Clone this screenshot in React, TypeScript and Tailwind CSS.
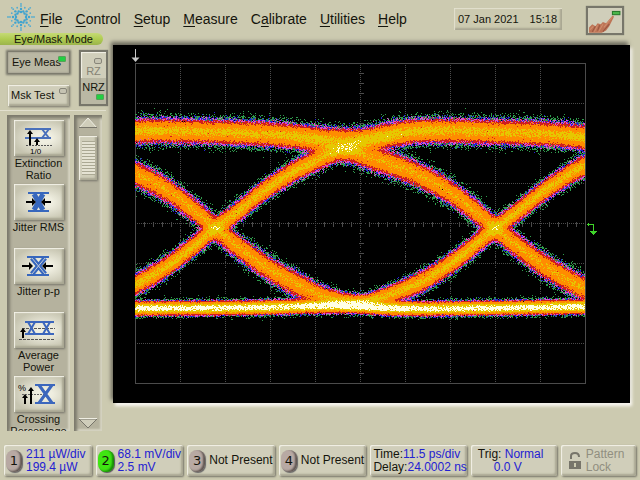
import { useMemo } from "react";
import type { ReactNode } from "react";

type Point = [number, number];

const SCREEN_W = 517;
const SCREEN_H = 358;
const GRID = { left: 22, top: 18, width: 450, height: 320 };

const FALLING: Point[] = [
  [-400, 130], [-300, 131], [-235, 132], [-200, 136], [-175, 142], [-145, 150], [-125, 157],
  [-95, 167], [-70, 178], [-45, 192], [-20, 211], [0, 228], [25, 248], [50, 266], [70, 278],
  [90, 288], [110, 296], [140, 302], [165, 305], [200, 307], [400, 308],
];

const RISING: Point[] = [
  [-400, 308], [-200, 307], [-160, 305], [-135, 302], [-115, 297], [-80, 284], [-55, 270],
  [-35, 256], [0, 228], [25, 209], [45, 193], [70, 176], [90, 165], [125, 149], [150, 141],
  [175, 135], [200, 131], [230, 130], [280, 132], [320, 134], [380, 137], [420, 138],
  [460, 134], [500, 131],
];

const LOW_RAIL: Point[] = [
  [0, 309], [135, 308], [260, 307], [330, 305], [360, 306], [400, 308], [450, 308], [600, 306],
];

const LEVELS = [
  { min: 1, color: "#2f9a4c" },
  { min: 2, color: "#2421d6" },
  { min: 3, color: "#d94fd0" },
  { min: 5, color: "#cf1d1d" },
  { min: 12, color: "#ff8c00" },
  { min: 42, color: "#e6c800" },
  { min: 96, color: "#ffffe6" },
];

function valueAt(points: Point[], x: number): number {
  for (let i = 1; i < points.length; i++) {
    if (x <= points[i][0]) {
      const p0 = points[Math.max(0, i - 2)];
      const p1 = points[i - 1];
      const p2 = points[i];
      const p3 = points[Math.min(points.length - 1, i + 1)];
      const h = p2[0] - p1[0];
      const t = (x - p1[0]) / h;
      const m1 = ((p2[1] - p0[1]) / (p2[0] - p0[0])) * h;
      const m2 = ((p3[1] - p1[1]) / (p3[0] - p1[0])) * h;
      const t2 = t * t;
      const t3 = t2 * t;
      return (
        (2 * t3 - 3 * t2 + 1) * p1[1] + (t3 - 2 * t2 + t) * m1 +
        (-2 * t3 + 3 * t2) * p2[1] + (t3 - t2) * m2
      );
    }
  }
  return points[points.length - 1][1];
}

/** 0 below `from`, 1 above `to`, straight line between them. */
function ramp(x: number, from: number, to: number): number {
  return Math.min(1, Math.max(0, (x - from) / (to - from)));
}

function makeRandom(seed: number) {
  let s = seed;
  return () => {
    s = (s + 0x6d2b79f5) | 0;
    let t = Math.imul(s ^ (s >>> 15), 1 | s);
    t = (t + Math.imul(t ^ (t >>> 7), 61 | t)) ^ t;
    return ((t ^ (t >>> 14)) >>> 0) / 4294967296;
  };
}

/** Number of waveform hits landing on a pixel whose expected count is `mean`. */
function sampleHits(mean: number, random: () => number): number {
  if (mean > 10) {
    const n = Math.sqrt(-2 * Math.log(random() + 1e-9)) * Math.cos(2 * Math.PI * random());
    return Math.round(mean * (1 + n * 0.24));
  }
  const limit = Math.exp(-mean);
  let k = 0;
  let p = random();
  while (p > limit) {
    k++;
    p *= random();
  }
  return k;
}

/** Builds one path per colour grade of the accumulated eye diagram. */
function buildEye(): string[] {
  const random = makeRandom(20210107);
  const paths = LEVELS.map(() => "");
  const firstX = 135;
  const centers: { y: number; sigma: number; peak: number }[][] = [];
  for (let x = firstX; x < firstX + GRID.width; x++) {
    const cols: { y: number; sigma: number; peak: number }[] = [];
    for (const cross of [-65, 215, 495, 775]) {
      const u = x - cross;
      const fall =
        (20 + 20 * ramp(u, -220, -150)) * ramp(u, -400, -340) * (1 - ramp(u, 150, 195));
      const rise =
        (51 - 22 * ramp(u, 170, 230)) * ramp(u, -195, -150) * (1 - ramp(u, 420, 490));
      const fy = valueAt(FALLING, u);
      const ry = valueAt(RISING, u);
      if (fall > 0) cols.push({ y: fy, sigma: 5.5 - 2.5 * ramp(fy, 285, 306), peak: fall });
      if (rise > 0) {
        cols.push({
          y: ry,
          sigma: 4.6 - 1.6 * ramp(ry, 285, 306) + 0.4 * (1 - ramp(ry, 132, 160)),
          peak: rise,
        });
      }
    }
    cols.push({ y: valueAt(LOW_RAIL, x), sigma: 2.8, peak: 130 });
    centers.push(cols);
  }
  for (let y = 100; y < 335; y++) {
    let runLevel = -1;
    let runStart = 0;
    for (let i = 0; i <= GRID.width; i++) {
      let level = -1;
      if (i < GRID.width) {
        let mean = 0;
        for (const c of centers[i]) {
          const d = (y - c.y) / c.sigma;
          if (d > -5 && d < 5) mean += c.peak * Math.exp(-0.5 * d * d);
        }
        const hits = mean > 0.001 ? sampleHits(mean, random) : 0;
        for (let l = 0; l < LEVELS.length; l++) if (hits >= LEVELS[l].min) level = l;
      }
      if (level !== runLevel) {
        if (runLevel >= 0) {
          const len = i - runStart;
          paths[runLevel] += `M${GRID.left + runStart} ${y - 45}h${len}v1h-${len}z`;
        }
        runLevel = level;
        runStart = i;
      }
    }
  }
  return paths;
}

function Graticule() {
  const { left, top, width, height } = GRID;
  const cx = left + 225;
  const cy = top + 160;
  let dots = "";
  for (let i = 1; i < 10; i++) dots += `M${left + i * 45} ${top + 1}V${top + height}`;
  let rows = "";
  for (let j = 1; j < 8; j++) rows += `M${left + 1} ${top + j * 40}H${left + width}`;
  let ticks = "";
  for (let i = 1; i < 50; i++) {
    if (i % 5) ticks += `M${left + i * 9} ${cy - 2}v5`;
  }
  for (let j = 1; j < 32; j++) {
    if (j % 4) ticks += `M${cx - 2} ${top + j * 10}h5`;
  }
  return (
    <g fill="none" stroke="#4b4b4b" transform="translate(0.5 0.5)" shapeRendering="crispEdges">
      <path d={dots} strokeDasharray="1 1" />
      <path d={rows} strokeDasharray="1 1" />
      <path d={ticks} />
      <rect x={left} y={top} width={width} height={height} />
    </g>
  );
}

function EyeDiagram() {
  const paths = useMemo(buildEye, []);
  return (
    <svg
      viewBox={`0 0 ${SCREEN_W} ${SCREEN_H}`}
      className="block w-full bg-black"
      role="img"
      aria-label="Eye diagram"
    >
      <Graticule />
      <g shapeRendering="crispEdges">
        {paths.map((d, i) => (
          <path key={LEVELS[i].color} d={d} fill={LEVELS[i].color} />
        ))}
      </g>
      <path d="M22.500 4V14" stroke="#c8c8c8" fill="none" />
      <path d="M18.500 12.500H26.500L22.500 17Z" fill="#c8c8c8" />
      <g stroke="#3fd42a" fill="none" shapeRendering="crispEdges">
        <path d="M474 179.500H481M480.500 179V188M475.500 178V181" />
        <path d="M477 186H484L480.500 190Z" fill="#3fd42a" stroke="none" />
      </g>
    </svg>
  );
}

const MENUS: [string, string, string][] = [
  ["", "F", "ile"],
  ["", "C", "ontrol"],
  ["", "S", "etup"],
  ["", "M", "easure"],
  ["C", "a", "librate"],
  ["", "U", "tilities"],
  ["", "H", "elp"],
];

function Spark() {
  const rays = Array.from({ length: 16 }, (_, i) => (i * Math.PI) / 8);
  return (
    <svg viewBox="-14 -14 28 28" className="size-7 shrink-0" role="img" aria-label="Logo">
      {rays.map((a, i) =>
        (i % 2 ? [6, 10] : [5, 8, 11, 13]).map((r) => (
          <circle
            key={`${i}-${r}`}
            cx={Math.cos(a) * r}
            cy={Math.sin(a) * r}
            r={r < 9 ? 1.2 : 0.9}
            fill={r < 9 ? "#3fa3cf" : "#55acd0"}
          />
        )),
      )}
    </svg>
  );
}

function Hand() {
  return (
    <svg viewBox="0 0 32 23" className="block h-full w-full" aria-hidden="true">
      <path d="M1 23V18L4 15L7 17L9 14L12 15L14 13L17 14L23 7Q25 7 24 9L20 17L17 21L13 23Z" fill="#bd7456" />
      <path d="M2 20L5 17M6 22L9 16M10 22L14 15M15 18L23 8" stroke="#cf8d6c" strokeWidth="1" fill="none" />
      <path d="M4 22L7 17M9 21L11 16M14 22L20 15" stroke="#9a5640" strokeWidth="1" fill="none" />
      <rect x="23" y="3" width="7" height="3" fill="#49b64a" stroke="#287b2d" strokeWidth="1" />
    </svg>
  );
}

function Led({ on = false }: { on?: boolean }) {
  return (
    <span
      className={
        on
          ? "block h-[6px] w-[8px] rounded-[1px] border border-[#55a257] bg-[#22cf42]"
          : "block h-[6px] w-[8px] rounded-[2px] border border-[#88867a] bg-[#c5c3b2]"
      }
    />
  );
}

const RAISED =
  "bg-[#d0ceba] shadow-[inset_1px_1px_1px_#f3f2e8,inset_-2px_-2px_2px_#a8a692,1px_1px_2px_#77756a]";
const PRESSED = "bg-[#bab8a4] shadow-[0_0_2px_2px_#77766a,inset_0_0_2px_#88867a]";

const UP = (x: number, top: number, bottom: number) =>
  `M${x} ${top}l3 4h-2V${bottom}h-2V${top + 4}h-2z`;

const MEASUREMENTS: { name: string; icon: ReactNode }[] = [
  {
    name: "Extinction Ratio",
    icon: (
      <>
        <path d="M11 9H37M11 18H27" stroke="#4a70bb" strokeWidth="2" />
        <path d="M28 9L35 18M35 9L28 18M26 18H37" stroke="#4a70bb" strokeWidth="2" />
        <path d="M12 25.500H38" stroke="#555" strokeDasharray="2 1" />
        <path d={UP(16, 10, 25)} />
        <path d={UP(23, 18, 25)} />
        <text x="16" y="34" fontSize="8" fontFamily="Liberation Sans, sans-serif">1/0</text>
      </>
    ),
  },
  {
    name: "Jitter\u00a0RMS",
    icon: (
      <>
        <path d="M14 9H35M14 27H35" stroke="#3767bd" strokeWidth="2" />
        <path d="M20 10L29 26M29 10L20 26" stroke="#3767bd" strokeWidth="5" />
        <path d="M12 17h6v-3l4 4-4 4v-3h-6zM37 17h-6v-3l-4 4 4 4v-3h6z" />
      </>
    ),
  },
  {
    name: "Jitter\u00a0p-p",
    icon: (
      <>
        <path d="M13 9H35M13 27H35" stroke="#3767bd" strokeWidth="2" />
        <path d="M18 10L31 26M31 10L18 26" stroke="#3767bd" strokeWidth="5" />
        <path d="M18 10L31 26M31 10L18 26" stroke="#c3cbd8" strokeWidth="1" />
        <path d="M8 17h7v-3l4 4-4 4v-3H8zM39 17h-7v-3l-4 4 4 4v-3h7z" />
      </>
    ),
  },
  {
    name: "Average Power",
    icon: (
      <>
        <path d="M8 16.500H41M5 27.500H41" stroke="#555" strokeDasharray="3 1" />
        <path d="M11 10H40M11 22H40" stroke="#3c67bd" strokeWidth="2" />
        <path d="M14 10L21 22M21 10L14 22M29 10L36 22M36 10L29 22" stroke="#3c67bd" strokeWidth="2" />
        <path d={UP(9, 16, 26)} />
      </>
    ),
  },
  {
    name: "Crossing Percentage",
    icon: (
      <>
        <path d="M8 18.500H30" stroke="#666" strokeDasharray="2 1" />
        <path d="M21 9H41M21 27H41" stroke="#3c67bd" strokeWidth="2" />
        <path d="M25 9L38 27M38 9L25 27" stroke="#3c67bd" strokeWidth="3" />
        <path d={UP(11, 18, 28)} />
        <path d={UP(17, 11, 28)} />
        <text x="4" y="15" fontSize="9" fontFamily="Liberation Sans, sans-serif">%</text>
      </>
    ),
  },
];

const TROUGH =
  "bg-[#b5b29e] shadow-[inset_3px_3px_3px_#7c7a6c,inset_-2px_-2px_2px_#d5d3c1]";

function Sidebar() {
  return (
    <aside className="flex w-[106px] shrink-0 flex-col text-[11px] whitespace-nowrap">
      <h1 className="h-3 w-[103px] rounded-r-full bg-gradient-to-b from-[#c5da75] via-[#b0cc51] to-[#9bb44b] pl-[14px] leading-3">
        Eye/Mask Mode
      </h1>
      <div className="flex justify-between pt-[7px] pl-2">
        <div className="flex w-[61px] flex-col gap-3">
          <button className={`relative h-[21px] pl-1 text-left ${PRESSED}`}>
            Eye Meas
            <span className="absolute top-[4px] right-[3px]"><Led on /></span>
          </button>
          <button className={`relative h-[21px] pl-[3px] text-left ${RAISED}`}>
            Msk Test
            <span className="absolute top-[3px] right-[2px]"><Led /></span>
          </button>
        </div>
        <button className="flex h-[52px] w-[25px] flex-col bg-[#bab8a4] shadow-[0_0_1px_2px_#77766a]">
          <span className="flex h-[26px] w-full flex-col items-center bg-[#d0ceba] pt-[6px] text-[#858375] shadow-[inset_1px_1px_1px_#f3f2e8]">
            <span className="pl-2"><Led /></span>
            <span className="leading-[14px]">RZ</span>
          </span>
          <span className="flex w-full flex-col items-center pt-[2px]">
            <span className="leading-[14px]">NRZ</span>
            <span className="pl-3"><Led on /></span>
          </span>
        </button>
      </div>
      <div className="mt-1 flex gap-1 border-t border-[#e2e0cf] pt-1 pl-[7px]">
        <ul className={`flex h-[316px] w-[63px] flex-col overflow-hidden pt-[5px] ${TROUGH}`}>
          {MEASUREMENTS.map((m) => (
            <li key={m.name} className="h-16 shrink-0">
              <button className="flex w-full flex-col items-center">
                <span
                  className={`block h-9 w-[50px] bg-[radial-gradient(ellipse_at_60%_50%,#efeee0_20%,#c6c4b0_75%)] ${RAISED}`}
                >
                  <svg viewBox="0 0 50 36" className="block h-full w-full" aria-hidden="true">
                    {m.icon}
                  </svg>
                </span>
                <span className="block w-full px-[2px] pt-px text-center leading-[12px] whitespace-normal">
                  {m.name}
                </span>
              </button>
            </li>
          ))}
        </ul>
        <div className={`flex h-[316px] w-[28px] flex-col items-center justify-between py-[2px] ${TROUGH}`}>
          <div className="flex flex-col items-center gap-2">
            <button aria-label="Scroll up" className="block">
              <svg viewBox="0 0 20 11" className="block h-[11px] w-5">
                <path d="M1 11L10 1L19 11Z" fill="#cfcdba" stroke="#efeee3" />
                <path d="M1 10.500H19" stroke="#77756a" />
              </svg>
            </button>
            <button
              aria-label="Scroll position"
              className={`flex h-[44px] w-[18px] items-center justify-center ${RAISED}`}
            >
              <span className="block h-[34px] w-[13px] bg-[repeating-linear-gradient(#aaa893_0_1px,#e5e3d3_1px_3px)]" />
            </button>
          </div>
          <button aria-label="Scroll down" className="block">
            <svg viewBox="0 0 20 11" className="block h-[11px] w-5">
              <path d="M1 1H19L10 10Z" fill="#cfcdba" stroke="#77756a" />
              <path d="M1 .500H19" stroke="#efeee3" />
            </svg>
          </button>
        </div>
      </div>
    </aside>
  );
}

function Badge({ n, on = false }: { n: number; on?: boolean }) {
  return (
    <span
      className={`flex h-[22px] w-4 shrink-0 items-center justify-center rounded-full font-['DejaVu_Sans'] text-[13px] leading-4 ${
        on
          ? "bg-[#3fe512] shadow-[inset_-2px_-1px_2px_#188a08,1px_1px_1px_#555]"
          : "bg-[#b8a9a3] shadow-[inset_-2px_-1px_2px_#5f5551,1px_1px_1px_#666]"
      }`}
    >
      {n}
    </span>
  );
}

const STATUS = `flex h-[31px] items-center rounded-[2px] whitespace-nowrap text-left leading-[13px] ${RAISED}`;

export default function App() {
  return (
    <div className="flex min-h-screen flex-col bg-[#cccab0] font-['Liberation_Sans',Arial,sans-serif] text-[12px] text-[#14140c]">
      <header className="flex h-[33px] items-center pr-[18px] pl-[7px] whitespace-nowrap">
        <Spark />
        <nav className="flex gap-[13px] pt-1 pl-[5px] text-[14px] leading-5">
          {MENUS.map(([before, key, after]) => (
            <button key={key + after}>
              {before}
              <span className="underline underline-offset-2">{key}</span>
              {after}
            </button>
          ))}
        </nav>
        <time
          dateTime="2021-01-07T15:18"
          className="mt-[5px] ml-auto flex h-[22px] w-[108px] shrink-0 items-center gap-[11px] pl-1 text-[11px] shadow-[inset_1px_1px_1px_#e4e2d0,inset_-2px_-2px_2px_#a8a692]"
        >
          <span>07 Jan 2021</span>
          <span>15:18</span>
        </time>
        <button
          aria-label="Touch screen"
          className="mt-[7px] ml-[26px] h-[25px] w-[34px] shrink-0 bg-[#d0ceba] shadow-[0_0_1px_2px_#77766a]"
        >
          <Hand />
        </button>
      </header>
      <div className="flex">
        <Sidebar />
        <main className="min-w-0 flex-1 pt-3 pr-[10px] pl-[7px]">
          <div className="shadow-[-2px_-3px_4px_#68665a,2px_3px_3px_#fbf9f4]">
            <EyeDiagram />
          </div>
        </main>
      </div>
      <footer className="mt-auto flex gap-1 px-1 pt-2 pb-1">
        <button className={`flex-[89_1_0%] gap-1 pl-[2px] ${STATUS}`}>
          <Badge n={1} />
          <span className="text-[#2321d2]">211 µW/div<br />199.4 µW</span>
        </button>
        <button className={`flex-[89_1_0%] gap-1 pl-[2px] ${STATUS}`}>
          <Badge n={2} on />
          <span className="text-[#2321d2]">68.1 mV/div<br />2.5 mV</span>
        </button>
        <button className={`flex-[89_1_0%] gap-1 pl-[2px] ${STATUS}`}>
          <Badge n={3} />
          <span>Not Present</span>
        </button>
        <button className={`flex-[89_1_0%] gap-1 pl-[2px] ${STATUS}`}>
          <Badge n={4} />
          <span>Not Present</span>
        </button>
        <button className={`flex-[97_1_0%] pl-[3px] ${STATUS}`}>
          <span>
            Time:<span className="text-[#2321d2]">11.5 ps/div</span><br />
            Delay:<span className="text-[#2321d2]">24.0002 ns</span>
          </span>
        </button>
        <button className={`flex-[82_1_0%] pl-[7px] ${STATUS}`}>
          <span>
            Trig: <span className="text-[#2321d2]">Normal</span><br />
            <span className="pl-4 text-[#2321d2]">0.0 V</span>
          </span>
        </button>
        <button className={`flex-[71_1_0%] gap-1 pl-[7px] text-[#918f80] ${STATUS}`}>
          <svg viewBox="0 0 14 20" className="h-5 w-[14px] shrink-0" aria-hidden="true">
            <path d="M3 8V5Q3 2 7 2T11 6" fill="none" stroke="#77756a" strokeWidth="2" />
            <rect x="1" y="10" width="12" height="8" fill="#77756a" />
            <path d="M7 12V16" stroke="#cccab0" strokeWidth="2" />
          </svg>
          <span>Pattern<br />Lock</span>
        </button>
      </footer>
    </div>
  );
}
